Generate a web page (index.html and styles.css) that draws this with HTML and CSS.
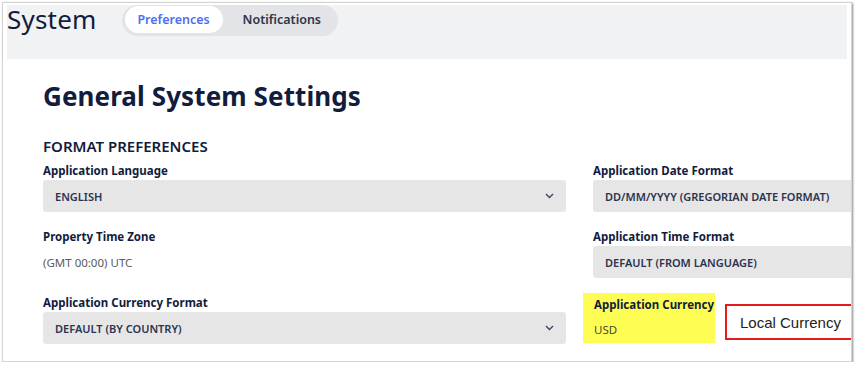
FILE: index.html
```html
<!DOCTYPE html>
<html lang="en">
<head>
    <meta charset="UTF-8">
    <meta name="viewport" content="width=device-width, initial-scale=1.0">
    <title>System - Preferences</title>
    <link rel="stylesheet" href="styles.css">
</head>
<body>
    <div class="frame">
        <div class="page-header">
            <h1 class="page-title">System</h1>
            <div class="tabs">
                <span class="tab active">Preferences</span>
                <span class="tab">Notifications</span>
            </div>
        </div>

        <div class="card">
            <h2>General System Settings</h2>
            <h3>FORMAT PREFERENCES</h3>

            <div class="fields">
                <div class="field">
                    <label>Application Language</label>
                    <div class="select">
                        <span>ENGLISH</span>
                        <svg class="chevron" width="9" height="6" viewBox="0 0 9 6"><path d="M1 1l3.5 3.5L8 1" fill="none" stroke="#3b4460" stroke-width="1.4"/></svg>
                    </div>
                </div>
                <div class="field">
                    <label>Application Date Format</label>
                    <div class="select">
                        <span>DD/MM/YYYY (GREGORIAN DATE FORMAT)</span>
                    </div>
                </div>

                <div class="field">
                    <label>Property Time Zone</label>
                    <div class="value">(GMT 00:00) UTC</div>
                </div>
                <div class="field">
                    <label>Application Time Format</label>
                    <div class="select">
                        <span>DEFAULT (FROM LANGUAGE)</span>
                    </div>
                </div>

                <div class="field">
                    <label>Application Currency Format</label>
                    <div class="select">
                        <span>DEFAULT (BY COUNTRY)</span>
                        <svg class="chevron" width="9" height="6" viewBox="0 0 9 6"><path d="M1 1l3.5 3.5L8 1" fill="none" stroke="#3b4460" stroke-width="1.4"/></svg>
                    </div>
                </div>
                <div class="field-row">
                    <div class="field highlight">
                        <label>Application Currency</label>
                        <div class="value">USD</div>
                    </div>
                    <div class="note">Local Currency</div>
                </div>
            </div>
        </div>
    </div>
</body>
</html>
```

FILE: styles.css
```css
body {
    margin: 0;
    background-color: #ffffff;
    font-family: 'Noto Sans', 'Open Sans', sans-serif;
    color: #121c3d;
}
.frame {
    margin: 2px 0 0 2px;
    width: 850px;
    height: 360px;
    border: 1px solid #d4d4d4;
    box-shadow: 1px 1px 2px rgba(0, 0, 0, 0.45);
    padding: 2px 4px 0 4px;
    overflow: hidden;
    box-sizing: border-box;
}
.page-header {
    display: flex;
    align-items: flex-start;
    height: 54px;
    background-color: #f1f2f4;
}
.page-title {
    margin: 0;
    font-size: 26px;
    font-weight: 400;
    line-height: 28px;
    letter-spacing: 0.2px;
}
.tabs {
    display: flex;
    margin: 0 0 0 25px;
    padding: 1px 17px 3px 3px;
    background-color: #e2e4e8;
    border-radius: 16px;
    height: 31px;
    box-sizing: border-box;
}
.tab {
    display: flex;
    align-items: center;
    padding: 0;
    font-size: 12.5px;
    font-weight: 600;
    color: #2e3445;
    border-radius: 14px;
}
.tab.active {
    background-color: #ffffff;
    color: #4d6ef2;
    width: 98px;
    justify-content: center;
    margin-right: 20px;
}
.card {
    padding: 20px 0 0 36px;
    background-color: #ffffff;
}
.card h2 {
    margin: 0;
    font-size: 26px;
    font-weight: 700;
    line-height: 34px;
    letter-spacing: 0.1px;
}
.card h3 {
    margin: 23px 0 0 0;
    font-size: 15px;
    font-weight: 600;
    line-height: 20px;
}
.fields {
    display: grid;
    grid-template-columns: 523px 523px;
    column-gap: 27px;
    row-gap: 17px;
    margin-top: 7px;
}
.field label {
    display: block;
    font-size: 11.5px;
    font-weight: 700;
    line-height: 15px;
    margin-bottom: 2px;
    white-space: nowrap;
}
.select {
    display: flex;
    align-items: center;
    justify-content: space-between;
    height: 32px;
    padding: 0 12px;
    background-color: #e6e6e6;
    border-radius: 3px;
    font-size: 11px;
    font-weight: 600;
    color: #2b3450;
}
.value {
    display: flex;
    align-items: center;
    height: 32px;
    font-size: 11.5px;
    color: #5b5b5b;
}
.field-row {
    display: flex;
    align-items: flex-start;
}
.highlight {
    margin: -2px 0 0 -10px;
    padding: 4px 2px 0 11px;
    width: 119px;
    height: 46px;
    background-color: #fdfd54;
}
.highlight .value {
    color: #4a4a30;
    height: 30px;
}
.note {
    margin: 9px 0 0 10px;
    width: 150px;
    height: 36px;
    box-sizing: border-box;
    border: 2px solid #e41b1b;
    padding: 0 13px;
    display: flex;
    align-items: center;
    font-family: 'Liberation Sans', Arial, sans-serif;
    font-size: 15px;
    color: #222222;
}
```
